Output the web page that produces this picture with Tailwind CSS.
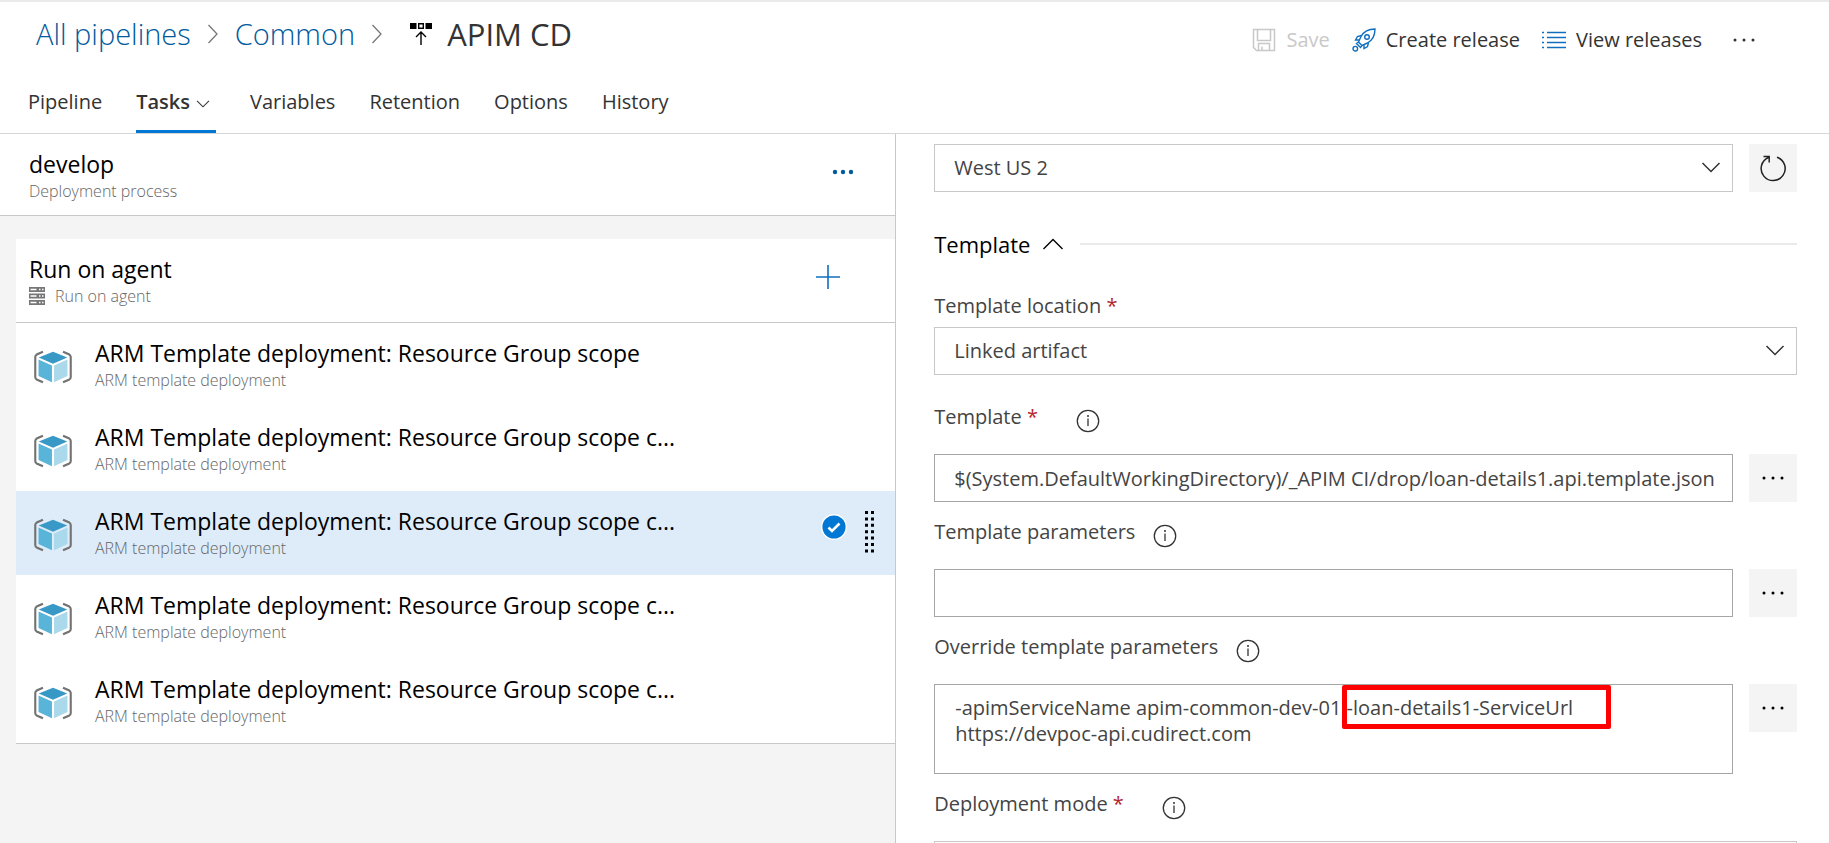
<!DOCTYPE html>
<html lang="en">
<head>
  <meta charset="UTF-8" />
  <meta name="viewport" content="width=device-width, initial-scale=1.0" />
  <title>APIM CD - Pipelines</title>
  <script src="https://cdn.jsdelivr.net/npm/@tailwindcss/browser@4"></script>
</head>
<body class="h-screen flex flex-col overflow-hidden bg-white text-[#333333] font-['Open_Sans',sans-serif]">

  <!-- Shared icons -->
  <svg class="hidden">
    <symbol id="arm" viewBox="0 0 36 32">
      <path d="M8.500 1.500L2.500 4.200Q1.200 5 1.200 6.500V25.500Q1.200 27 2.500 27.800L8.500 30.500M27.500 1.500L33.500 4.200Q34.800 5 34.800 6.500V25.500Q34.800 27 33.500 27.800L27.500 30.500" fill="none" stroke="#727272" stroke-width="2" />
      <path d="M18 1.500L31.500 7L18 13L4.500 7Z" fill="#3999c6" />
      <path d="M4.300 9L17 14.600V30.500L4.300 24.600Z" fill="#59b4d9" />
      <path d="M31.700 9L19 14.600V30.500L31.700 24.600Z" fill="#a9d9eb" />
    </symbol>
    <symbol id="info" viewBox="0 0 24 24">
      <circle cx="12" cy="12" r="10.700" fill="none" stroke="#333333" stroke-width="1.300" />
      <path d="M12 9.500V17" stroke="#333333" stroke-width="1.300" />
      <circle cx="12" cy="7" r="1" fill="#333333" />
    </symbol>
    <symbol id="dots" viewBox="0 0 24 4">
      <circle cx="3" cy="2" r="1.500" fill="currentColor" />
      <circle cx="12" cy="2" r="1.500" fill="currentColor" />
      <circle cx="21" cy="2" r="1.500" fill="currentColor" />
    </symbol>
    <symbol id="down" viewBox="0 0 20 11">
      <path d="M1.500 1L10 9.500L18.500 1" fill="none" stroke="#333333" stroke-width="1.500" />
    </symbol>
    <symbol id="right" viewBox="0 0 12 20">
      <path d="M1.500 1L10 10L1.500 19" fill="none" stroke="#777777" stroke-width="1.300" />
    </symbol>
  </svg>

  <header class="border-t-2 border-[#eaeaea]">
    <div class="flex justify-between pl-9 pr-[71px] pt-3.5">
      <nav class="flex items-center h-9 text-[29px] leading-9">
        <a href="#" class="font-light text-[#005a9e]">All pipelines</a>
        <svg class="w-3 h-5 mx-4"><use href="#right" /></svg>
        <a href="#" class="font-light text-[#005a9e]">Common</a>
        <svg class="w-3 h-5 mx-4"><use href="#right" /></svg>
        <svg class="w-6 h-6 ml-2.5 mr-3.5" viewBox="0 0 24 24">
          <path d="M1 1h6.500v6H1zM16.500 1H23v6h-6.500z" fill="#000000" />
          <path d="M9.700 1.700h4.600v4.600H9.700z" fill="none" stroke="#000000" stroke-width="1.400" />
          <path d="M12 23V9.500M7 15L12 10L17 15" fill="none" stroke="#000000" stroke-width="1.400" />
        </svg>
        <h1 class="text-[31px]">APIM CD</h1>
      </nav>
      <div class="flex items-center mt-1 h-10 text-[20px] leading-7">
        <button class="flex items-center text-[#c8c8c8]" disabled>
          <svg class="w-6 h-6 mr-2.5" viewBox="0 0 24 24" fill="none" stroke="currentColor" stroke-width="1.500">
            <path d="M1.500 1.500H22.500V22.500H4.500L1.500 19.500ZM5.500 1.500V12.500H18.500V1.500M6.500 22.500V15.500H17.500V22.500M10 22V18.500" />
          </svg>
          Save
        </button>
        <button class="flex items-center ml-5.5">
          <svg class="w-6 h-6 mr-2.5" viewBox="0 0 24 24" fill="none" stroke="#106ebe" stroke-width="1.400">
            <path d="M23 1C17 1 11.500 4 9 8.500L6.500 14L10 17.500L15.500 15C20 12.500 23 7 23 1Z" />
            <circle cx="15" cy="9" r="2.300" />
            <path d="M9.500 7.500L5.500 8.500L3.500 12L7.500 12M16.500 14.500L15.500 18.500L12 20.500V16.500M6.500 14L4.500 15.500L8.500 19.500L10 17.500" />
            <circle cx="3.300" cy="20.700" r="2.300" />
          </svg>
          Create release
        </button>
        <button class="flex items-center ml-5.5">
          <svg class="w-6 h-6 mr-2.5" viewBox="0 0 24 24" stroke="#106ebe" stroke-width="1.500">
            <path d="M5 4.500H24M5 9.500H24M5 14.500H24M5 19.500H24M0 4.500H2M0 9.500H2M0 14.500H2M0 19.500H2" />
          </svg>
          View releases
        </button>
        <button class="ml-7" aria-label="More actions"><svg class="w-7 h-1"><use href="#dots" /></svg></button>
      </div>
    </div>
    <nav class="flex gap-[34px] mt-7 pl-7 h-[46px] text-[20px] leading-7 border-b border-[#d6d6d6]">
      <a href="#">Pipeline</a>
      <a href="#" class="flex items-start gap-1.5 pr-1.5 font-semibold border-b-[3px] border-[#0078d4]">Tasks <svg class="w-3.5 h-2 mt-3"><use href="#down" /></svg></a>
      <a href="#">Variables</a>
      <a href="#">Retention</a>
      <a href="#">Options</a>
      <a href="#">History</a>
    </nav>
  </header>

  <main class="flex flex-1 min-h-0">
    <section class="w-[49%] shrink-0 border-r border-[#c8c8c8] bg-[#f4f4f4] text-black">
      <div class="flex justify-between h-[82px] pt-[15px] pl-[29px] pr-10 bg-white border-b border-[#c8c8c8]">
        <div>
          <h2 class="text-[23px] leading-[30px]">develop</h2>
          <p class="text-[16px] leading-6 font-light text-[#666666]">Deployment process</p>
        </div>
        <button class="self-start mt-5" aria-label="Process menu">
          <svg class="w-6 h-1.5" viewBox="0 0 24 6" fill="#005a9e"><circle cx="4" cy="3" r="2.200" /><circle cx="12" cy="3" r="2.200" /><circle cx="20" cy="3" r="2.200" /></svg>
        </button>
      </div>

      <div class="ml-4 mt-[23px] bg-white border-b border-[#c8c8c8]">
        <div class="flex justify-between h-[84px] pt-[15px] pl-[13px] pr-[54px] border-b border-[#c8c8c8]">
          <div>
            <h3 class="text-[23px] leading-[30px]">Run on agent</h3>
            <p class="flex items-center gap-2.5 text-[16px] leading-6 font-light text-[#666666]">
              <svg class="w-4 h-5" viewBox="0 0 16 20">
                <path d="M0 1h16v5H0zM0 7.500h16v5H0zM0 14h16v5H0z" fill="#777777" />
                <path d="M1.500 3.500h6M1.500 10h6M1.500 16.500h6M10 3.500h1.500M13 3.500h1.500M10 10h1.500M13 10h1.500M10 16.500h1.500M13 16.500h1.500" stroke="#ffffff" stroke-width="1.400" />
              </svg>
              Run on agent
            </p>
          </div>
          <button class="self-start mt-2.5" aria-label="Add a task">
            <svg class="w-[26px] h-[26px]" viewBox="0 0 26 26" stroke="#106ebe" stroke-width="1.600"><path d="M13 1V25M1 13H25" /></svg>
          </button>
        </div>

        <ul>
          <li class="flex h-[84px] pt-[15px] pl-[18px]">
            <svg class="w-[38px] h-[34px] mt-3 mr-[23px]"><use href="#arm" /></svg>
            <div>
              <h4 class="text-[23px] leading-[30px]">ARM Template deployment: Resource Group scope</h4>
              <p class="text-[16px] leading-6 font-light text-[#666666]">ARM template deployment</p>
            </div>
          </li>
          <li class="flex h-[84px] pt-[15px] pl-[18px]">
            <svg class="w-[38px] h-[34px] mt-3 mr-[23px]"><use href="#arm" /></svg>
            <div>
              <h4 class="text-[23px] leading-[30px]">ARM Template deployment: Resource Group scope c...</h4>
              <p class="text-[16px] leading-6 font-light text-[#666666]">ARM template deployment</p>
            </div>
          </li>
          <li class="flex h-[84px] pt-[15px] pl-[18px] pr-5 bg-[#deecf9]">
            <svg class="w-[38px] h-[34px] mt-3 mr-[23px]"><use href="#arm" /></svg>
            <div>
              <h4 class="text-[23px] leading-[30px]">ARM Template deployment: Resource Group scope c...</h4>
              <p class="text-[16px] leading-6 font-light text-[#666666]">ARM template deployment</p>
            </div>
            <svg class="w-[26px] h-[26px] mt-2 ml-auto mr-4" viewBox="0 0 26 26">
              <circle cx="13" cy="13" r="12.300" fill="#0078d4" stroke="#ffffff" stroke-width="1.400" />
              <path d="M7.500 13.500L11 17L18.500 9.500" fill="none" stroke="#ffffff" stroke-width="2.600" />
            </svg>
            <svg class="w-3 h-11 mt-1" viewBox="0 0 12 44">
              <path d="M3.500 1V44M9.500 1V44" stroke="#000000" stroke-width="3" stroke-dasharray="3 3.400" />
            </svg>
          </li>
          <li class="flex h-[84px] pt-[15px] pl-[18px]">
            <svg class="w-[38px] h-[34px] mt-3 mr-[23px]"><use href="#arm" /></svg>
            <div>
              <h4 class="text-[23px] leading-[30px]">ARM Template deployment: Resource Group scope c...</h4>
              <p class="text-[16px] leading-6 font-light text-[#666666]">ARM template deployment</p>
            </div>
          </li>
          <li class="flex h-[84px] pt-[15px] pl-[18px]">
            <svg class="w-[38px] h-[34px] mt-3 mr-[23px]"><use href="#arm" /></svg>
            <div>
              <h4 class="text-[23px] leading-[30px]">ARM Template deployment: Resource Group scope c...</h4>
              <p class="text-[16px] leading-6 font-light text-[#666666]">ARM template deployment</p>
            </div>
          </li>
        </ul>
      </div>
    </section>

    <form class="flex-1 min-w-0 overflow-hidden pl-[38px] pr-8 pt-2.5 text-[20px] leading-7 text-[#444444]">
      <div class="flex gap-4">
        <div class="relative flex-1">
          <select aria-label="Location" class="appearance-none w-full h-12 px-[19px] border border-[#c8c8c8] bg-white"><option>West US 2</option></select>
          <svg class="absolute right-3 top-[18px] w-5 h-[11px] pointer-events-none"><use href="#down" /></svg>
        </div>
        <button type="button" aria-label="Refresh" class="flex items-center justify-center w-12 h-12 bg-[#f4f4f4]">
          <svg class="w-7 h-7" viewBox="0 0 28 28" fill="none" stroke="#222222" stroke-width="1.500">
            <path d="M18 3.200A12 12 0 1 1 9.500 3.500M4.500 2.500H10.200V8.500" />
          </svg>
        </button>
      </div>

      <div class="flex items-center h-8 mt-9 text-black">
        <h2 class="text-[22px] leading-8">Template</h2>
        <button type="button" aria-label="Collapse section" class="ml-3 mr-4">
          <svg class="w-[22px] h-3" viewBox="0 0 22 12"><path d="M1.500 11L11 1.500L20.500 11" fill="none" stroke="#000000" stroke-width="1.400" /></svg>
        </button>
        <div class="flex-1 h-0.5 bg-[#eaeaea]"></div>
      </div>

      <div class="mt-8">
        <label for="location" class="block">Template location <span class="text-[#b4262c]">*</span></label>
        <div class="relative mt-[7px]">
          <select id="location" class="appearance-none w-full h-12 px-[19px] border border-[#c8c8c8] bg-white"><option>Linked artifact</option></select>
          <svg class="absolute right-3 top-[18px] w-5 h-[11px] pointer-events-none"><use href="#down" /></svg>
        </div>
      </div>

      <div class="mt-7">
        <div class="flex items-start h-[51px]">
          <label for="template">Template <span class="text-[#b4262c]">*</span></label>
          <svg class="w-6 h-6 mt-1.5 ml-[38px]"><use href="#info" /></svg>
        </div>
        <div class="flex gap-4">
          <input id="template" type="text" value="$(System.DefaultWorkingDirectory)/_APIM CI/drop/loan-details1.api.template.json" class="flex-1 min-w-0 h-12 pl-[19px] pr-4 border border-[#a6a6a6]" />
          <button type="button" aria-label="Browse template" class="flex items-center justify-center w-12 h-12 bg-[#f4f4f4] text-black"><svg class="w-6 h-1"><use href="#dots" /></svg></button>
        </div>
      </div>

      <div class="mt-4">
        <div class="flex items-start h-[51px]">
          <label for="params">Template parameters</label>
          <svg class="w-6 h-6 mt-1.5 ml-[18px]"><use href="#info" /></svg>
        </div>
        <div class="flex gap-4">
          <input id="params" type="text" class="flex-1 min-w-0 h-12 px-[19px] border border-[#a6a6a6]" />
          <button type="button" aria-label="Browse parameters" class="flex items-center justify-center w-12 h-12 bg-[#f4f4f4] text-black"><svg class="w-6 h-1"><use href="#dots" /></svg></button>
        </div>
      </div>

      <div class="mt-4">
        <div class="flex items-start h-[51px]">
          <label for="override">Override template parameters</label>
          <svg class="w-6 h-6 mt-1.5 ml-[18px]"><use href="#info" /></svg>
        </div>
        <div class="flex gap-4">
          <div class="relative flex-1">
            <textarea id="override" class="block w-full h-[90px] px-5 py-2.5 leading-[26px] resize-none overflow-hidden border border-[#a6a6a6]">-apimServiceName apim-common-dev-01 -loan-details1-ServiceUrl https://devpoc-api.cudirect.com</textarea>
            <!-- Marks the service url parameter -->
            <div class="absolute left-[408px] top-px w-[269px] h-11 border-5 border-[#ff0000] rounded-xs pointer-events-none"></div>
          </div>
          <button type="button" aria-label="Edit overrides" class="flex items-center justify-center w-12 h-12 bg-[#f4f4f4] text-black"><svg class="w-6 h-1"><use href="#dots" /></svg></button>
        </div>
      </div>

      <div class="mt-4">
        <div class="flex items-start h-[51px]">
          <label for="mode">Deployment mode <span class="text-[#b4262c]">*</span></label>
          <svg class="w-6 h-6 mt-1.5 ml-[38px]"><use href="#info" /></svg>
        </div>
        <select id="mode" class="appearance-none w-full h-12 px-[19px] border border-[#c8c8c8] bg-white"><option>Incremental</option></select>
      </div>
    </form>
  </main>
</body>
</html>
